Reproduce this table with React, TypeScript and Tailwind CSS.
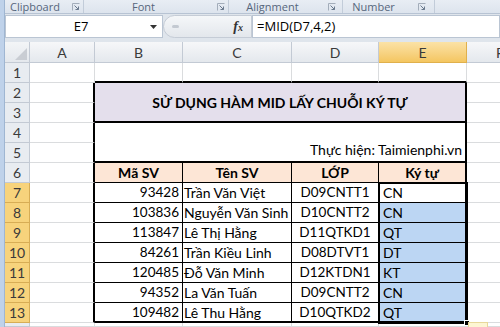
import React from "react";

const rows: [number, string, string, string][] = [
  [93428, "Trần Văn Việt", "D09CNTT1", "CN"],
  [103836, "Nguyễn Văn Sinh", "D10CNTT2", "CN"],
  [113847, "Lê Thị Hằng", "D11QTKD1", "QT"],
  [84261, "Trần Kiều Linh", "D08DTVT1", "DT"],
  [120485, "Đỗ Văn Minh", "D12KTDN1", "KT"],
  [94352, "La Văn Tuấn", "D09CNTT2", "CN"],
  [109482, "Lê Thu Hằng", "D10QTKD2", "QT"],
];

function Launcher() {
  return (
    <svg width="8" height="8" viewBox="0 0 8 8" className="shrink-0">
      <path d="M0.5 7.5V0.5H7.5" fill="none" stroke="#a3adba" />
      <path d="M2.5 2.5L6.5 6.5M6.5 3.5V6.5H3.5" fill="none" stroke="#6b7a8e" />
    </svg>
  );
}

function RowHeader({ n, hl }: { n?: number; hl?: boolean }) {
  return hl ? (
    <div className="flex items-center justify-center bg-[#f7d37c] border-r border-b border-[#d7ad55] text-[#3a3a3a] text-[14px]">
      {n}
    </div>
  ) : (
    <div className="flex items-center justify-center bg-[#e8ecf1] border-r border-b border-[#c3cad4] text-[#3a3a3a] text-[14px]">
      {n}
    </div>
  );
}

function Blank() {
  return <div className="border-r border-b border-[#dadcde]" />;
}

function ABorder() {
  return <div className="border-b border-[#dadcde] border-r-2 border-r-black" />;
}

function F() {
  return <div className="border-b border-[#dadcde]" />;
}

export default function App() {
  return (
    <div className="w-[500px] h-[327px] overflow-hidden bg-white flex font-['Lato',sans-serif]">
      <div className="w-[5px] h-full bg-[#bfd2ea] border-r border-[#9fb6d2] shrink-0" />
      <div className="flex-1 flex flex-col min-w-0">
        {/* ribbon group labels */}
        <div className="h-[14px] flex bg-gradient-to-b from-[#e8edf4] to-[#dde4ed] border-b border-[#b7c3d3] text-[11px] leading-[13px] text-[#56667c] font-['Open_Sans',sans-serif] shrink-0">
          <div className="w-[79px] flex items-start pl-[5px] pr-[3px] border-r border-[#c2ccd9]">
            <span>Clipboard</span>
            <span className="ml-auto mt-[3px]"><Launcher /></span>
          </div>
          <div className="w-[145px] flex items-start pr-[3px] border-r border-[#c2ccd9]">
            <span className="flex-1 text-center pr-[14px]">Font</span>
            <span className="mt-[3px]"><Launcher /></span>
          </div>
          <div className="w-[114px] flex items-start pr-[6px] border-r border-[#c2ccd9]">
            <span className="flex-1 text-center pr-[12px]">Alignment</span>
            <span className="mt-[3px]"><Launcher /></span>
          </div>
          <div className="w-[92px] flex items-start pr-[8px] border-r border-[#c2ccd9]">
            <span className="flex-1 text-center pr-[14px]">Number</span>
            <span className="mt-[3px]"><Launcher /></span>
          </div>
          <div className="flex-1" />
        </div>

        {/* formula bar */}
        <div className="h-[28px] flex bg-[#dfe5ec] pt-[1px] pb-[4px] shrink-0 font-['Open_Sans',sans-serif] text-[13px] text-black">
          <div className="w-[158px] h-[23px] bg-white border border-[#bac5d3] flex items-center">
            <span className="flex-1 text-center pl-[6px]">E7</span>
            <svg width="7" height="4" viewBox="0 0 7 4" className="mr-[5px]">
              <path d="M0 0H7L3.5 4Z" fill="#333" />
            </svg>
          </div>
          <div className="w-[89px] h-[23px] bg-gradient-to-b from-[#f5f7f9] to-[#e3e7ec] rounded-l-[12px] border border-[#c5ccd6] flex items-center">
            <div className="ml-[8px] w-[7px] h-[3px] rounded-full bg-[#c3c9d1]" />
            <span className="ml-auto mr-[8px] font-['Liberation_Serif',serif] italic font-bold text-[14px] text-[#333] leading-none">
              f<span className="text-[10px]">x</span>
            </span>
          </div>
          <div className="flex-1 h-[23px] bg-white border border-[#bac5d3] flex items-center pl-[4px]">
            =MID(D7,4,2)
          </div>
        </div>

        {/* sheet */}
        <div className="relative flex-1 grid grid-cols-[25px_65px_88px_109px_87px_88px_1fr] grid-rows-[21px_repeat(13,20px)_1fr] text-[14px] text-black">
          {/* column headers */}
          <div className="bg-gradient-to-b from-[#f3f5f7] to-[#e4e8ed] border-r border-b border-[#c3cad4] flex items-end justify-end p-[2px]">
            <svg width="12" height="12" viewBox="0 0 12 12">
              <path d="M12 0V12H0Z" fill="#c9cdd3" />
            </svg>
          </div>
          {["A", "B", "C", "D"].map((c) => (
            <div key={c} className="bg-gradient-to-b from-[#f6f7f9] to-[#e4e8ed] border-r border-b border-[#c3cad4] flex items-center justify-center text-[#3a3a3a] text-[14px]">
              {c}
            </div>
          ))}
          <div className="bg-gradient-to-b from-[#fbe2a6] to-[#f4c660] border-r border-b border-[#e0b04c] flex items-center justify-center text-[#3a3a3a] text-[14px]">
            E
          </div>
          <div className="bg-gradient-to-b from-[#f6f7f9] to-[#e4e8ed] border-b border-[#c3cad4] flex items-center pl-[29px] text-[#3a3a3a] text-[14px] overflow-hidden">
            F
          </div>

          {/* row 1 */}
          <RowHeader n={1} />
          <Blank />
          <div className="border-r border-r-[#dadcde] border-b-2 border-b-black" />
          <div className="border-r border-r-[#dadcde] border-b-2 border-b-black" />
          <div className="border-r border-r-[#dadcde] border-b-2 border-b-black" />
          <div className="border-r border-r-[#dadcde] border-b-2 border-b-black" />
          <F />

          {/* rows 2-3 title */}
          <RowHeader n={2} />
          <ABorder />
          <div className="col-span-4 row-span-2 bg-[#e4dfec] border-r-2 border-b-2 border-black flex items-center justify-center font-bold text-[14px]">
            SỬ DỤNG HÀM MID LẤY CHUỖI KÝ TỰ
          </div>
          <F />
          <RowHeader n={3} />
          <ABorder />
          <F />

          {/* rows 4-5 */}
          <RowHeader n={4} />
          <ABorder />
          <div className="col-span-4 row-span-2 bg-white border-r-2 border-b-2 border-black flex items-end justify-end pr-[3px] pb-[1px] text-[14px]">
            Thực hiện: Taimienphi.vn
          </div>
          <F />
          <RowHeader n={5} />
          <ABorder />
          <F />

          {/* row 6 headers */}
          <RowHeader n={6} />
          <ABorder />
          <div className="bg-[#fde6d6] border-r border-b border-black flex items-center justify-center font-bold">Mã SV</div>
          <div className="bg-[#fde6d6] border-r border-b border-black flex items-center justify-center font-bold">Tên SV</div>
          <div className="bg-[#fde6d6] border-r border-b border-black flex items-center justify-center font-bold">LỚP</div>
          <div className="bg-[#fde6d6] border-r-2 border-b border-black flex items-center justify-center font-bold">Ký tự</div>
          <F />

          {/* data rows */}
          {rows.map((r, i) => {
            const last = i === rows.length - 1;
            return (
              <React.Fragment key={i}>
                <RowHeader n={7 + i} hl />
                <ABorder />
                <div className={last ? "border-r border-b-2 border-black flex items-center justify-end pr-[3px] text-[13.5px]" : "border-r border-b border-black flex items-center justify-end pr-[3px] text-[13.5px]"}>
                  {r[0]}
                </div>
                <div className={last ? "border-r border-b-2 border-black flex items-center pl-[1px] whitespace-nowrap" : "border-r border-b border-black flex items-center pl-[1px] whitespace-nowrap"}>
                  {r[1]}
                </div>
                <div className={last ? "border-r border-b-2 border-black flex items-center justify-center text-[13.5px]" : "border-r border-b border-black flex items-center justify-center text-[13.5px]"}>
                  {r[2]}
                </div>
                <div className={i === 0 ? "bg-white border-r-2 border-b border-black flex items-center pl-[4px]" : last ? "bg-[#bcd6f3] border-r-2 border-b-2 border-black flex items-center pl-[4px]" : "bg-[#bcd6f3] border-r-2 border-b border-black flex items-center pl-[4px]"}>
                  {r[3]}
                </div>
                <F />
              </React.Fragment>
            );
          })}

          {/* row 14 partial */}
          <RowHeader />
          <Blank />
          <Blank />
          <Blank />
          <Blank />
          <Blank />
          <F />

          {/* selection border */}
          <div className="absolute left-[373px] top-[140px] w-[90px] h-[142px] border-2 border-black pointer-events-none" />
          {/* fill handle */}
          <div className="absolute left-[459px] top-[278px] w-[6px] h-[6px] bg-black border border-white pointer-events-none" />
          {/* auto fill options button (partial) */}
          <div className="absolute left-[463px] top-[280px] w-[20px] h-[10px] bg-[#fdf6d3] border border-[#e8d89a] pointer-events-none" />
        </div>
      </div>
    </div>
  );
}
